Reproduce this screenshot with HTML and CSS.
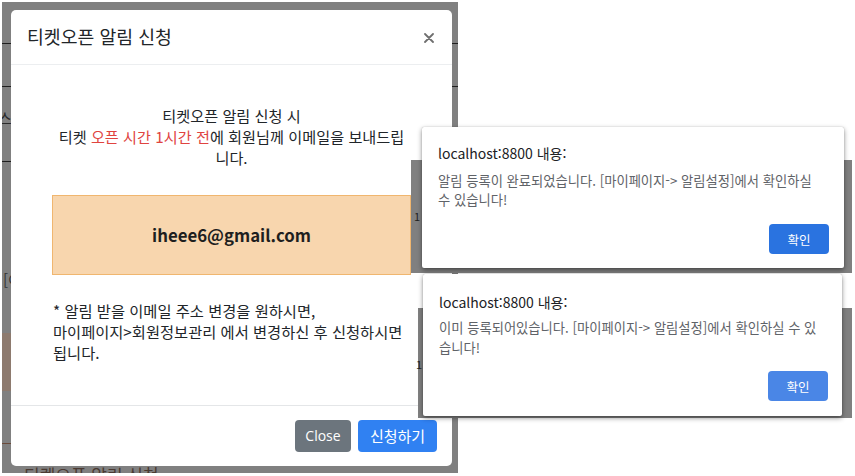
FILE: index.html
```html
<!DOCTYPE html>
<html lang="ko">
<head>
<meta charset="utf-8">
<title>티켓오픈 알림 신청</title>
<link rel="stylesheet" href="styles.css">
</head>
<body>
<div class="stage">
  <div class="backdrop">
    <div class="page-line line-a"></div>
    <div class="page-line line-b"></div>
    <div class="page-line line-c"></div>
    <div class="page-line line-d"></div>
    <span class="page-frag frag-a">스</span>
    <span class="page-frag frag-b">[이</span>
    <div class="page-tint"></div>
    <span class="page-frag frag-c">티켓오픈 알림 신청</span>

    <div class="modal">
      <div class="modal-header">
        <h5 class="modal-title">티켓오픈 알림 신청</h5>
        <svg class="close-icon" width="10" height="10" viewBox="0 0 10 10" aria-label="close">
          <path d="M1 1 L9 9 M9 1 L1 9" stroke="#6f6f6f" stroke-width="1.8" stroke-linecap="round"/>
        </svg>
      </div>
      <div class="modal-body">
        <p class="lead">티켓오픈 알림 신청 시<br>티켓 <span class="accent">오픈 시간 1시간 전</span>에 회원님께 이메일을 보내드립<br>니다.</p>
        <div class="email-box">iheee6@gmail.com</div>
        <p class="note">* 알림 받을 이메일 주소 변경을 원하시면,<br>마이페이지&gt;회원정보관리 에서 변경하신 후 신청하시면<br>됩니다.</p>
      </div>
      <div class="modal-footer">
        <button class="btn btn-secondary">Close</button>
        <button class="btn btn-primary">신청하기</button>
      </div>
    </div>
  </div>

  <div class="shade shade-one"><span class="shade-frag">1</span></div>
  <div class="dialog dialog-one">
    <div class="dialog-title">localhost:8800 내용:</div>
    <div class="dialog-msg">알림 등록이 완료되었습니다. [마이페이지-&gt; 알림설정]에서 확인하실<br>수 있습니다!</div>
    <div class="dialog-actions"><button class="dialog-btn">확인</button></div>
  </div>

  <div class="shade shade-two"><span class="shade-frag">1</span></div>
  <div class="dialog dialog-two">
    <div class="dialog-title">localhost:8800 내용:</div>
    <div class="dialog-msg">이미 등록되어있습니다. [마이페이지-&gt; 알림설정]에서 확인하실 수 있<br>습니다!</div>
    <div class="dialog-actions"><button class="dialog-btn dialog-btn-soft">확인</button></div>
  </div>
</div>
</body>
</html>
```

FILE: styles.css
```css
* { box-sizing: border-box; }

html, body {
  margin: 0;
  padding: 0;
  background: #ffffff;
}

body {
  font-family: "Noto Sans CJK KR", "Noto Sans", sans-serif;
  color: #212529;
  width: 855px;
  height: 476px;
  overflow: hidden;
}

.stage {
  position: relative;
  width: 855px;
  height: 476px;
  padding: 2px 0 0 2px;
}

/* ---------- left: bootstrap modal over dimmed page ---------- */
.backdrop {
  position: relative;
  z-index: 0;
  width: 456px;
  height: 471px;
  background: #808080;
  padding: 8px 6px 0 9px;
  overflow: hidden;
}

.page-line {
  position: absolute;
  left: 0;
  height: 1px;
  background: #1e1e1e;
}
.line-a { top: 41px; right: 0; }
.line-b { top: 84px; right: 0; }
.line-c { top: 159px; right: 0; }
.line-d { top: 441px; width: 30px; background: #6a4a3a; }

.page-frag {
  position: absolute;
  font-size: 15px;
  color: #2a2a2a;
  line-height: 1;
}
.frag-a { left: -4px; top: 108px; }
.frag-b { left: 1px; top: 270px; color: #333; }
.frag-c { left: 22px; top: 464px; font-size: 17px; color: #4a3a32; }

.page-tint {
  position: absolute;
  left: 0;
  top: 331px;
  width: 10px;
  height: 58px;
  background: #8d7a6e;
}

.modal {
  position: relative;
  z-index: 1;
  width: 441px;
  height: 456px;
  background: #ffffff;
  border-radius: 5px;
  display: flex;
  flex-direction: column;
}

.modal-header {
  height: 55px;
  padding: 0 18px 0 16px;
  display: flex;
  align-items: center;
  justify-content: space-between;
  border-bottom: 1px solid #eceef0;
}

.modal-title {
  margin: 0;
  font-size: 18.3px;
  font-weight: 400;
  color: #212529;
  line-height: 1.2;
}

.close-icon { display: block; margin-top: 1px; }

.modal-body {
  flex: 1;
  padding: 40px 41px 0 41px;
}

.lead {
  margin: 0 0 27px 0;
  text-align: center;
  font-size: 15.2px;
  line-height: 21px;
}

.accent { color: #e0443f; }

.email-box {
  height: 80px;
  display: flex;
  align-items: center;
  justify-content: center;
  background: #f8d6ae;
  border: 1px solid #f0b66f;
  font-size: 16.8px;
  font-weight: 700;
  color: #1f1f1f;
}

.note {
  margin: 25px 0 0 1px;
  font-size: 15.3px;
  line-height: 21px;
  white-space: nowrap;
}

.modal-footer {
  height: 61px;
  border-top: 1px solid #e4e6e8;
  padding: 0 15px 0 0;
  display: flex;
  justify-content: flex-end;
  align-items: center;
  gap: 7px;
}

.btn {
  height: 32px;
  border: 0;
  border-radius: 4px;
  font-family: "Noto Sans CJK KR", "Open Sans", sans-serif;
  font-size: 14px;
  color: #ffffff;
  padding: 0;
  line-height: 32px;
}
.btn-secondary { background: #6c757d; width: 56px; font-family: "Open Sans", sans-serif; }
.btn-primary { background: #3081f2; width: 79px; font-size: 15px; }

/* ---------- right: browser alert dialogs ---------- */
.shade {
  position: absolute;
  z-index: 1;
  background: #808080;
}
.shade-one { left: 411px; top: 160px; width: 441px; height: 113px; }
.shade-two { left: 418px; top: 308px; width: 434px; height: 110px; }

.shade-frag {
  position: absolute;
  left: 3px;
  top: 48px;
  font-size: 11px;
  color: #222;
}
.shade-two .shade-frag { left: -2px; top: 48px; }

.dialog {
  position: absolute;
  z-index: 2;
  background: #ffffff;
  border-radius: 2px;
  box-shadow: 0 2px 5px rgba(0, 0, 0, 0.45), 0 0 1px rgba(0, 0, 0, 0.3);
  font-family: "Noto Sans CJK KR", sans-serif;
}
.dialog-one { left: 422px; top: 127px; width: 422px; height: 141px; padding: 16px 15px 14px 16px; }
.dialog-two { left: 423px; top: 274px; width: 419px; height: 142px; padding: 18px 14px 15px 16px; }

.dialog-title {
  font-size: 14px;
  line-height: 20px;
  color: #202124;
}

.dialog-msg {
  font-size: 13.3px;
  color: #5f6368;
  white-space: nowrap;
}
.dialog-one .dialog-msg { margin-top: 7.5px; line-height: 19px; }
.dialog-two .dialog-msg { margin-top: 6px; line-height: 20px; }

.dialog-actions {
  display: flex;
  justify-content: flex-end;
}
.dialog-one .dialog-actions { margin-top: 15.5px; }
.dialog-two .dialog-actions { margin-top: 13px; }

.dialog-btn {
  width: 60px;
  height: 30px;
  border: 0;
  border-radius: 4px;
  background: #2a73e0;
  color: #ffffff;
  font-family: "Noto Sans CJK KR", sans-serif;
  font-size: 12.5px;
  padding: 0;
}
.dialog-btn-soft { background: #4a86e6; }
```
